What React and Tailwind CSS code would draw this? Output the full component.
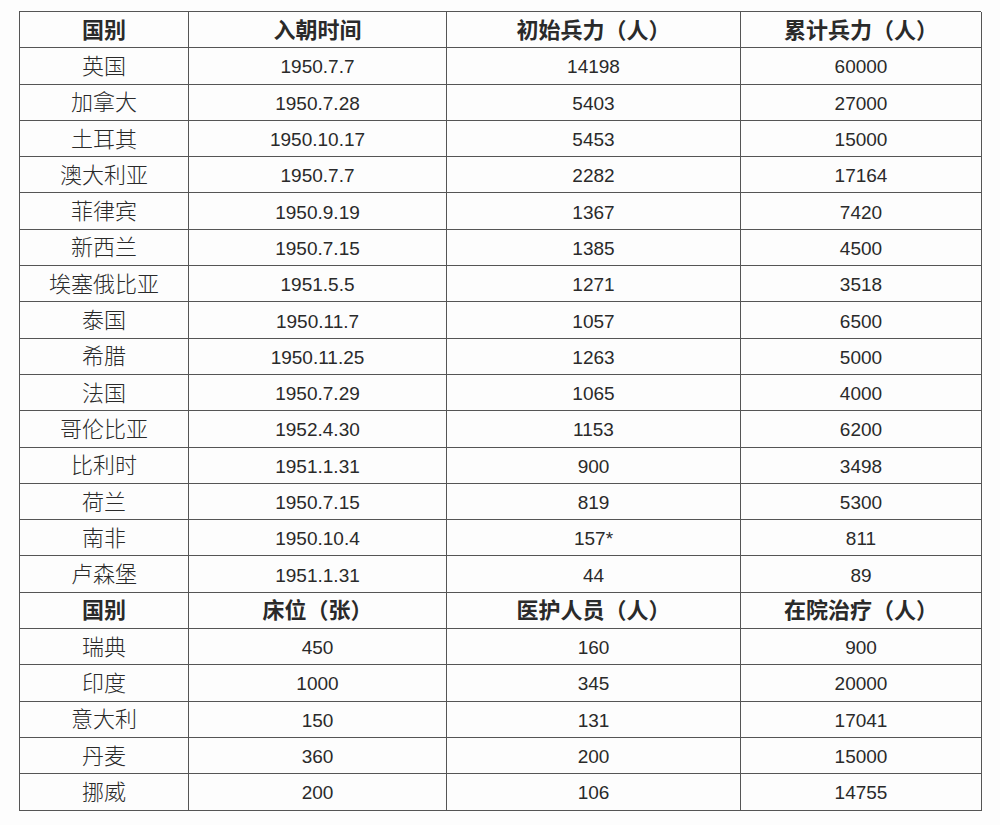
import React from "react";

const topHead = ["国别", "入朝时间", "初始兵力（人）", "累计兵力（人）"];
const troops = [
  ["英国", "1950.7.7", "14198", "60000"],
  ["加拿大", "1950.7.28", "5403", "27000"],
  ["土耳其", "1950.10.17", "5453", "15000"],
  ["澳大利亚", "1950.7.7", "2282", "17164"],
  ["菲律宾", "1950.9.19", "1367", "7420"],
  ["新西兰", "1950.7.15", "1385", "4500"],
  ["埃塞俄比亚", "1951.5.5", "1271", "3518"],
  ["泰国", "1950.11.7", "1057", "6500"],
  ["希腊", "1950.11.25", "1263", "5000"],
  ["法国", "1950.7.29", "1065", "4000"],
  ["哥伦比亚", "1952.4.30", "1153", "6200"],
  ["比利时", "1951.1.31", "900", "3498"],
  ["荷兰", "1950.7.15", "819", "5300"],
  ["南非", "1950.10.4", "157*", "811"],
  ["卢森堡", "1951.1.31", "44", "89"],
];
const medHead = ["国别", "床位（张）", "医护人员（人）", "在院治疗（人）"];
const medical = [
  ["瑞典", "450", "160", "900"],
  ["印度", "1000", "345", "20000"],
  ["意大利", "150", "131", "17041"],
  ["丹麦", "360", "200", "15000"],
  ["挪威", "200", "106", "14755"],
];

// Chinese text sits a bit larger and lighter than the digits in the source
const isCjk = (s) => /[\u3000-\u9fff\uff00-\uffef]/.test(s);

const Cell = ({ children, bold }) => {
  const cjk = isCjk(children);
  let size = "text-[19px]";
  if (cjk) size = bold ? "text-[22px] font-bold" : "text-[22px] font-light";
  return (
    <div className="h-[36.3px] border-r border-b border-[#555] flex items-center justify-center pt-[2px] text-[#2a2a2a]">
      <span className={`leading-none ${size}`}>{children}</span>
    </div>
  );
};

export default function App() {
  const rows = [
    { cells: topHead, bold: true },
    ...troops.map((r) => ({ cells: r })),
    { cells: medHead, bold: true },
    ...medical.map((r) => ({ cells: r })),
  ];

  return (
    <div
      className="w-[1000px] h-[825px] bg-[#fdfdfd] pt-[11px] pl-[19px]"
      style={{ fontFamily: '"Liberation Sans", "Noto Sans CJK SC", sans-serif' }}
    >
      <div className="grid grid-cols-[169px_258px_294px_241px] w-[962px] border-t border-l border-[#555]">
        {rows.map((row, i) =>
          row.cells.map((c, j) => (
            <Cell key={`${i}-${j}`} bold={row.bold}>
              {c}
            </Cell>
          ))
        )}
      </div>
    </div>
  );
}
